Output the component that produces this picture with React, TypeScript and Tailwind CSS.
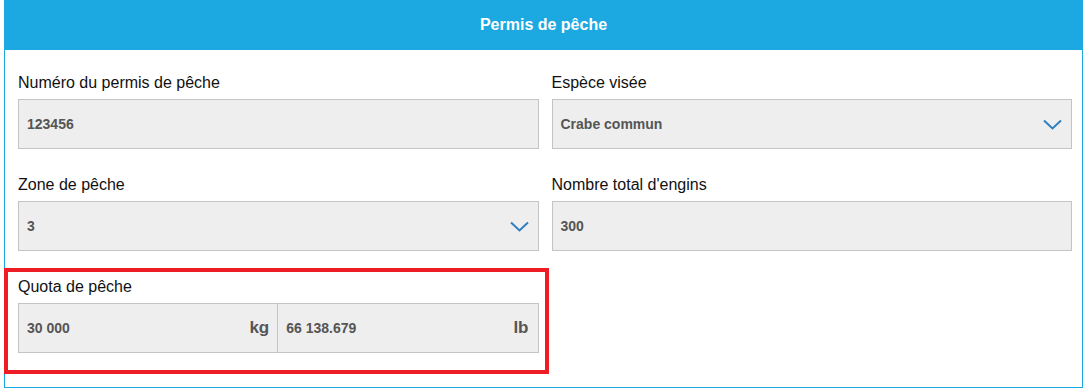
import React from 'react';

const Chevron = () => (
  <svg width="19" height="11" viewBox="0 0 19 11" fill="none" className="shrink-0">
    <path d="M1 1.5l8.5 8 8.5-8" stroke="#2e7fc0" strokeWidth="2" />
  </svg>
);

const Label = ({ children }: { children: React.ReactNode }) => (
  <div className="mb-[6px] h-[20px] text-[16px] leading-[20px] text-[#111]">{children}</div>
);

const Field = ({ label, value, select }: { label: string; value: string; select?: boolean }) => (
  <div>
    <Label>{label}</Label>
    <div className="flex h-[50px] items-center justify-between border border-[#c4c4c4] bg-[#eeeeee] pl-[8px] pr-[9px]">
      <span className="text-[14px] font-bold text-[#555]">{value}</span>
      {select && <Chevron />}
    </div>
  </div>
);

const App = () => {
  return (
    <div className="h-[389px] w-[1085px] bg-white font-['Liberation_Sans',Arial,sans-serif]">
      <div className="ml-[4px] h-[388px] w-[1079px] border-x border-b border-[#1ca8e0]">
        <div className="flex h-[50px] items-center justify-center bg-[#1ca8e0] text-[16px] font-bold text-white">
          Permis de pêche
        </div>

        <div className="grid grid-cols-2 gap-x-[13px] gap-y-[26px] pb-[34px] pl-[13px] pr-[10px] pt-[23px]">
          <Field label="Numéro du permis de pêche" value="123456" />
          <Field label="Espèce visée" value="Crabe commun" select />
          <Field label="Zone de pêche" value="3" select />
          <Field label="Nombre total d'engins" value="300" />

          <div className="-mb-[21px] -ml-[14px] -mr-[10px] -mt-[9px] border-4 border-[#ee1c25] pb-[17px] pl-[10px] pr-[6px] pt-[5px]">
            <Label>Quota de pêche</Label>
            <div className="flex h-[50px] border border-[#c4c4c4] bg-[#eeeeee]">
              <div className="flex flex-1 items-center justify-between border-r border-[#c4c4c4] pl-[8px] pr-[8px]">
                <span className="text-[14px] font-bold text-[#555]">30 000</span>
                <span className="text-[17px] font-bold text-[#555]">kg</span>
              </div>
              <div className="flex flex-1 items-center justify-between pl-[8px] pr-[9px]">
                <span className="text-[14px] font-bold text-[#555]">66 138.679</span>
                <span className="text-[17px] font-bold text-[#555]">lb</span>
              </div>
            </div>
          </div>
        </div>
      </div>
    </div>
  );
};

export default App;
